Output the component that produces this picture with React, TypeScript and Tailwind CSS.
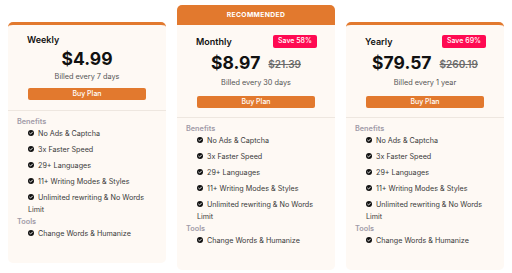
import React from "react";

type Plan = {
  name: string;
  price: string;
  old?: string;
  save?: string;
  billed: string;
  recommended?: boolean;
};

const plans: Plan[] = [
  { name: "Weekly", price: "$4.99", billed: "Billed every 7 days" },
  { name: "Monthly", price: "$8.97", old: "$21.39", save: "Save 58%", billed: "Billed every 30 days", recommended: true },
  { name: "Yearly", price: "$79.57", old: "$260.19", save: "Save 69%", billed: "Billed every 1 year" },
];

const benefits = [
  "No Ads & Captcha",
  "3x Faster Speed",
  "29+ Languages",
  "11+ Writing Modes & Styles",
  "Unlimited rewriting & No Words Limit",
];

function Check() {
  return (
    <svg viewBox="0 0 12 12" className="inline-block w-[6px] h-[6px] mr-[4px] align-[0px]">
      <circle cx="6" cy="6" r="6" fill="#111" />
      <path d="M3.2 6.2 L5.2 8.1 L8.9 4.2" stroke="#fff" strokeWidth="1.8" fill="none" strokeLinecap="round" strokeLinejoin="round" />
    </svg>
  );
}

function Card({ p }: { p: Plan }) {
  const hasBadge = !!p.save;
  return (
    <div
      className={
        "flex flex-col bg-[#fef9f4] rounded-[5px] overflow-hidden " +
        (p.recommended ? "-mt-[17px]" : "border-t-[3px] border-[#e2792e]")
      }
    >
      {p.recommended && (
        <div className="h-[20px] bg-[#e2792e] flex items-center justify-center text-white text-[6.8px] font-bold tracking-[0.35px]">
          RECOMMENDED
        </div>
      )}
      <div className="px-[18px] pt-[10px]">
        <div className={"flex items-center justify-between " + (hasBadge ? "h-[13px]" : "h-[10px]")}>
          <span className="text-[9px] font-semibold text-[#111] pl-[1px]">{p.name}</span>
          {p.save && (
            <span className="w-[44px] h-[13px] rounded-[2px] bg-[#ff0a52] text-white text-[7px] font-medium flex items-center justify-center">
              {p.save}
            </span>
          )}
        </div>
        <div className={"flex items-center justify-center gap-[8px] h-[20px] " + (hasBadge ? "mt-[5px]" : "mt-[4px]")}>
          <span className="text-[17.5px] font-bold text-[#111] leading-none">{p.price}</span>
          {p.old && (
            <span className="text-[10px] font-semibold text-[#6b6b6b] line-through mt-[3px]">{p.old}</span>
          )}
        </div>
        <div className={"h-[10px] flex items-center justify-center text-[7.3px] text-[#555] " + (hasBadge ? "mt-[5px]" : "mt-[3px]")}>
          {p.billed}
        </div>
        <div className={"px-[2px] " + (hasBadge ? "mt-[8px]" : "mt-[6px]")}>
          <div className="h-[12px] rounded-[2px] bg-[#e2792e] flex items-center justify-center text-white text-[7px] font-medium">
            Buy Plan
          </div>
        </div>
      </div>
      <div className={"border-t border-[#eee7e0] px-[9px] pt-[5px] pb-[23px] " + (hasBadge ? "mt-[9px]" : "mt-[10px]")}>
        <div className="text-[7.3px] font-semibold text-[#a19ba8] leading-[12px]">Benefits</div>
        <ul className="pl-[11px] pr-[2px] flex flex-col gap-[4px]">
          {benefits.map((b) => (
            <li key={b} className="text-[7.2px] text-[#3a3a3a] leading-[12px]">
              <Check />
              {b}
            </li>
          ))}
        </ul>
        <div className="text-[7.3px] font-semibold text-[#a19ba8] leading-[12px]">Tools</div>
        <ul className="pl-[11px]">
          <li className="text-[7.2px] text-[#3a3a3a] leading-[12px]">
            <Check />
            Change Words &amp; Humanize
          </li>
        </ul>
      </div>
    </div>
  );
}

export default function App() {
  return (
    <div
      className="w-[512px] h-[273px] bg-white overflow-hidden"
      style={{ fontFamily: "Inter, 'Liberation Sans', sans-serif" }}
    >
      <div className="grid grid-cols-3 gap-[11px] px-[8px] pt-[22px] items-start">
        {plans.map((p) => (
          <Card key={p.name} p={p} />
        ))}
      </div>
    </div>
  );
}
